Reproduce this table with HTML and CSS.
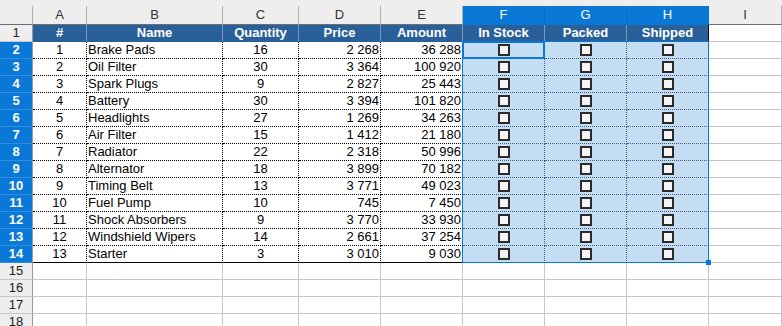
FILE: index.html
```html
<!DOCTYPE html>
<html>
<head>
<meta charset="utf-8">
<link rel="stylesheet" href="styles.css">
</head>
<body>
<div class="sheet">
  <div class="strip"></div>
  <div class="grid">
    <div class="ch corner"></div><div class="ch">A</div><div class="ch">B</div><div class="ch">C</div><div class="ch">D</div><div class="ch">E</div><div class="ch on">F</div><div class="ch on">G</div><div class="ch on">H</div><div class="ch">I</div>

    <div class="rh">1</div><div class="th">#</div><div class="th">Name</div><div class="th">Quantity</div><div class="th">Price</div><div class="th">Amount</div><div class="th">In Stock</div><div class="th">Packed</div><div class="th end">Shipped</div><div class="e"></div>

    <div class="rh on">2</div><div class="c n">1</div><div class="c l">Brake Pads</div><div class="c n">16</div><div class="c r">2 268</div><div class="c r">36 288</div><div class="c s"><span class="box"></span></div><div class="c s"><span class="box"></span></div><div class="c s"><span class="box"></span></div><div class="e"></div>
    <div class="rh on">3</div><div class="c n">2</div><div class="c l">Oil Filter</div><div class="c n">30</div><div class="c r">3 364</div><div class="c r">100 920</div><div class="c s"><span class="box"></span></div><div class="c s"><span class="box"></span></div><div class="c s"><span class="box"></span></div><div class="e"></div>
    <div class="rh on">4</div><div class="c n">3</div><div class="c l">Spark Plugs</div><div class="c n">9</div><div class="c r">2 827</div><div class="c r">25 443</div><div class="c s"><span class="box"></span></div><div class="c s"><span class="box"></span></div><div class="c s"><span class="box"></span></div><div class="e"></div>
    <div class="rh on">5</div><div class="c n">4</div><div class="c l">Battery</div><div class="c n">30</div><div class="c r">3 394</div><div class="c r">101 820</div><div class="c s"><span class="box"></span></div><div class="c s"><span class="box"></span></div><div class="c s"><span class="box"></span></div><div class="e"></div>
    <div class="rh on">6</div><div class="c n">5</div><div class="c l">Headlights</div><div class="c n">27</div><div class="c r">1 269</div><div class="c r">34 263</div><div class="c s"><span class="box"></span></div><div class="c s"><span class="box"></span></div><div class="c s"><span class="box"></span></div><div class="e"></div>
    <div class="rh on">7</div><div class="c n">6</div><div class="c l">Air Filter</div><div class="c n">15</div><div class="c r">1 412</div><div class="c r">21 180</div><div class="c s"><span class="box"></span></div><div class="c s"><span class="box"></span></div><div class="c s"><span class="box"></span></div><div class="e"></div>
    <div class="rh on">8</div><div class="c n">7</div><div class="c l">Radiator</div><div class="c n">22</div><div class="c r">2 318</div><div class="c r">50 996</div><div class="c s"><span class="box"></span></div><div class="c s"><span class="box"></span></div><div class="c s"><span class="box"></span></div><div class="e"></div>
    <div class="rh on">9</div><div class="c n">8</div><div class="c l">Alternator</div><div class="c n">18</div><div class="c r">3 899</div><div class="c r">70 182</div><div class="c s"><span class="box"></span></div><div class="c s"><span class="box"></span></div><div class="c s"><span class="box"></span></div><div class="e"></div>
    <div class="rh on">10</div><div class="c n">9</div><div class="c l">Timing Belt</div><div class="c n">13</div><div class="c r">3 771</div><div class="c r">49 023</div><div class="c s"><span class="box"></span></div><div class="c s"><span class="box"></span></div><div class="c s"><span class="box"></span></div><div class="e"></div>
    <div class="rh on">11</div><div class="c n">10</div><div class="c l">Fuel Pump</div><div class="c n">10</div><div class="c r">745</div><div class="c r">7 450</div><div class="c s"><span class="box"></span></div><div class="c s"><span class="box"></span></div><div class="c s"><span class="box"></span></div><div class="e"></div>
    <div class="rh on">12</div><div class="c n">11</div><div class="c l">Shock Absorbers</div><div class="c n">9</div><div class="c r">3 770</div><div class="c r">33 930</div><div class="c s"><span class="box"></span></div><div class="c s"><span class="box"></span></div><div class="c s"><span class="box"></span></div><div class="e"></div>
    <div class="rh on">13</div><div class="c n">12</div><div class="c l">Windshield Wipers</div><div class="c n">14</div><div class="c r">2 661</div><div class="c r">37 254</div><div class="c s"><span class="box"></span></div><div class="c s"><span class="box"></span></div><div class="c s"><span class="box"></span></div><div class="e"></div>
    <div class="rh on">14</div><div class="c n last">13</div><div class="c l last">Starter</div><div class="c n last">3</div><div class="c r last">3 010</div><div class="c r last">9 030</div><div class="c s"><span class="box"></span></div><div class="c s"><span class="box"></span></div><div class="c s"><span class="box"></span></div><div class="e"></div>

    <div class="rh">15</div><div class="e"></div><div class="e"></div><div class="e"></div><div class="e"></div><div class="e"></div><div class="e"></div><div class="e"></div><div class="e"></div><div class="e"></div>
    <div class="rh">16</div><div class="e"></div><div class="e"></div><div class="e"></div><div class="e"></div><div class="e"></div><div class="e"></div><div class="e"></div><div class="e"></div><div class="e"></div>
    <div class="rh">17</div><div class="e"></div><div class="e"></div><div class="e"></div><div class="e"></div><div class="e"></div><div class="e"></div><div class="e"></div><div class="e"></div><div class="e"></div>
    <div class="rh">18</div><div class="e"></div><div class="e"></div><div class="e"></div><div class="e"></div><div class="e"></div><div class="e"></div><div class="e"></div><div class="e"></div><div class="e"></div>
  </div>
  <div class="selection"></div>
  <div class="active"></div>
  <div class="handle"></div>
</div>
</body>
</html>
```
FILE: styles.css
```css
html, body {
  margin: 0;
  padding: 0;
  background: #ffffff;
  overflow: hidden;
}
body {
  font-family: "Liberation Sans", Arial, sans-serif;
  font-size: 13px;
  color: #000;
}
.sheet {
  position: relative;
  width: 782px;
  height: 326px;
  overflow: hidden;
}
.strip {
  height: 6px;
  background: #eeeeee;
}
.grid {
  display: grid;
  grid-template-columns: 33px 54px 136px 76px 82px 82px 82px 82px 82px 1fr;
  grid-template-rows: 19px;
  grid-auto-rows: 17px;
}
.grid > div {
  box-sizing: border-box;
  border-right: 1px solid #c6c6c6;
  border-bottom: 1px solid #c6c6c6;
  line-height: 16px;
  white-space: nowrap;
  overflow: hidden;
  padding: 0 1px;
}
.grid > .ch {
  background: #eeeeee;
  color: #333333;
  text-align: center;
  line-height: 18px;
  border-right-color: #b0b0b0;
  border-bottom-color: #6e6e6e;
}
.grid > .ch.on {
  background: #0a78d7;
  color: #ffffff;
  border-right-color: #0a6cc4;
  border-bottom-color: #0a78d7;
}
.grid > .rh {
  background: #eeeeee;
  color: #222222;
  text-align: center;
  border-right-color: #9a9a9a;
  border-bottom-color: #c6c6c6;
}
.grid > .rh.on {
  background: #0a78d7;
  color: #ffffff;
  font-weight: bold;
  border-bottom-color: #2f8ddd;
}
.grid > .th {
  background: #2a6099;
  color: #ffffff;
  font-weight: bold;
  text-align: center;
  border-right-color: #7898bd;
  border-bottom-color: #2a6099;
}
.grid > .th.end {
  border-right-color: #000000;
}
.grid > .c {
  border-right: 1px dotted #000000;
  border-bottom: 1px dotted #000000;
}
.grid > .n { text-align: center; }
.grid > .l { text-align: left; }
.grid > .r { text-align: right; }
.grid > .last {
  border-bottom: 1px solid #000000;
}
.grid > .s {
  background: #c4ddf3;
  border-right-color: #3f5f80;
  border-bottom-color: #3f5f80;
  display: flex;
  align-items: center;
  justify-content: center;
}
.box {
  display: block;
  width: 12px;
  height: 12px;
  box-sizing: border-box;
  border: 2px solid #2b2b2b;
  background: #f4f4f4;
  margin-left: 1px;
}
.selection {
  position: absolute;
  left: 462px;
  top: 41px;
  width: 247px;
  height: 222px;
  box-sizing: border-box;
  border: 1px solid #0a78d7;
  pointer-events: none;
}
.active {
  position: absolute;
  left: 462px;
  top: 41px;
  width: 83px;
  height: 18px;
  box-sizing: border-box;
  border: 2px solid #0a78d7;
}
.handle {
  position: absolute;
  left: 706px;
  top: 260px;
  width: 5px;
  height: 5px;
  background: #0a78d7;
}
```
